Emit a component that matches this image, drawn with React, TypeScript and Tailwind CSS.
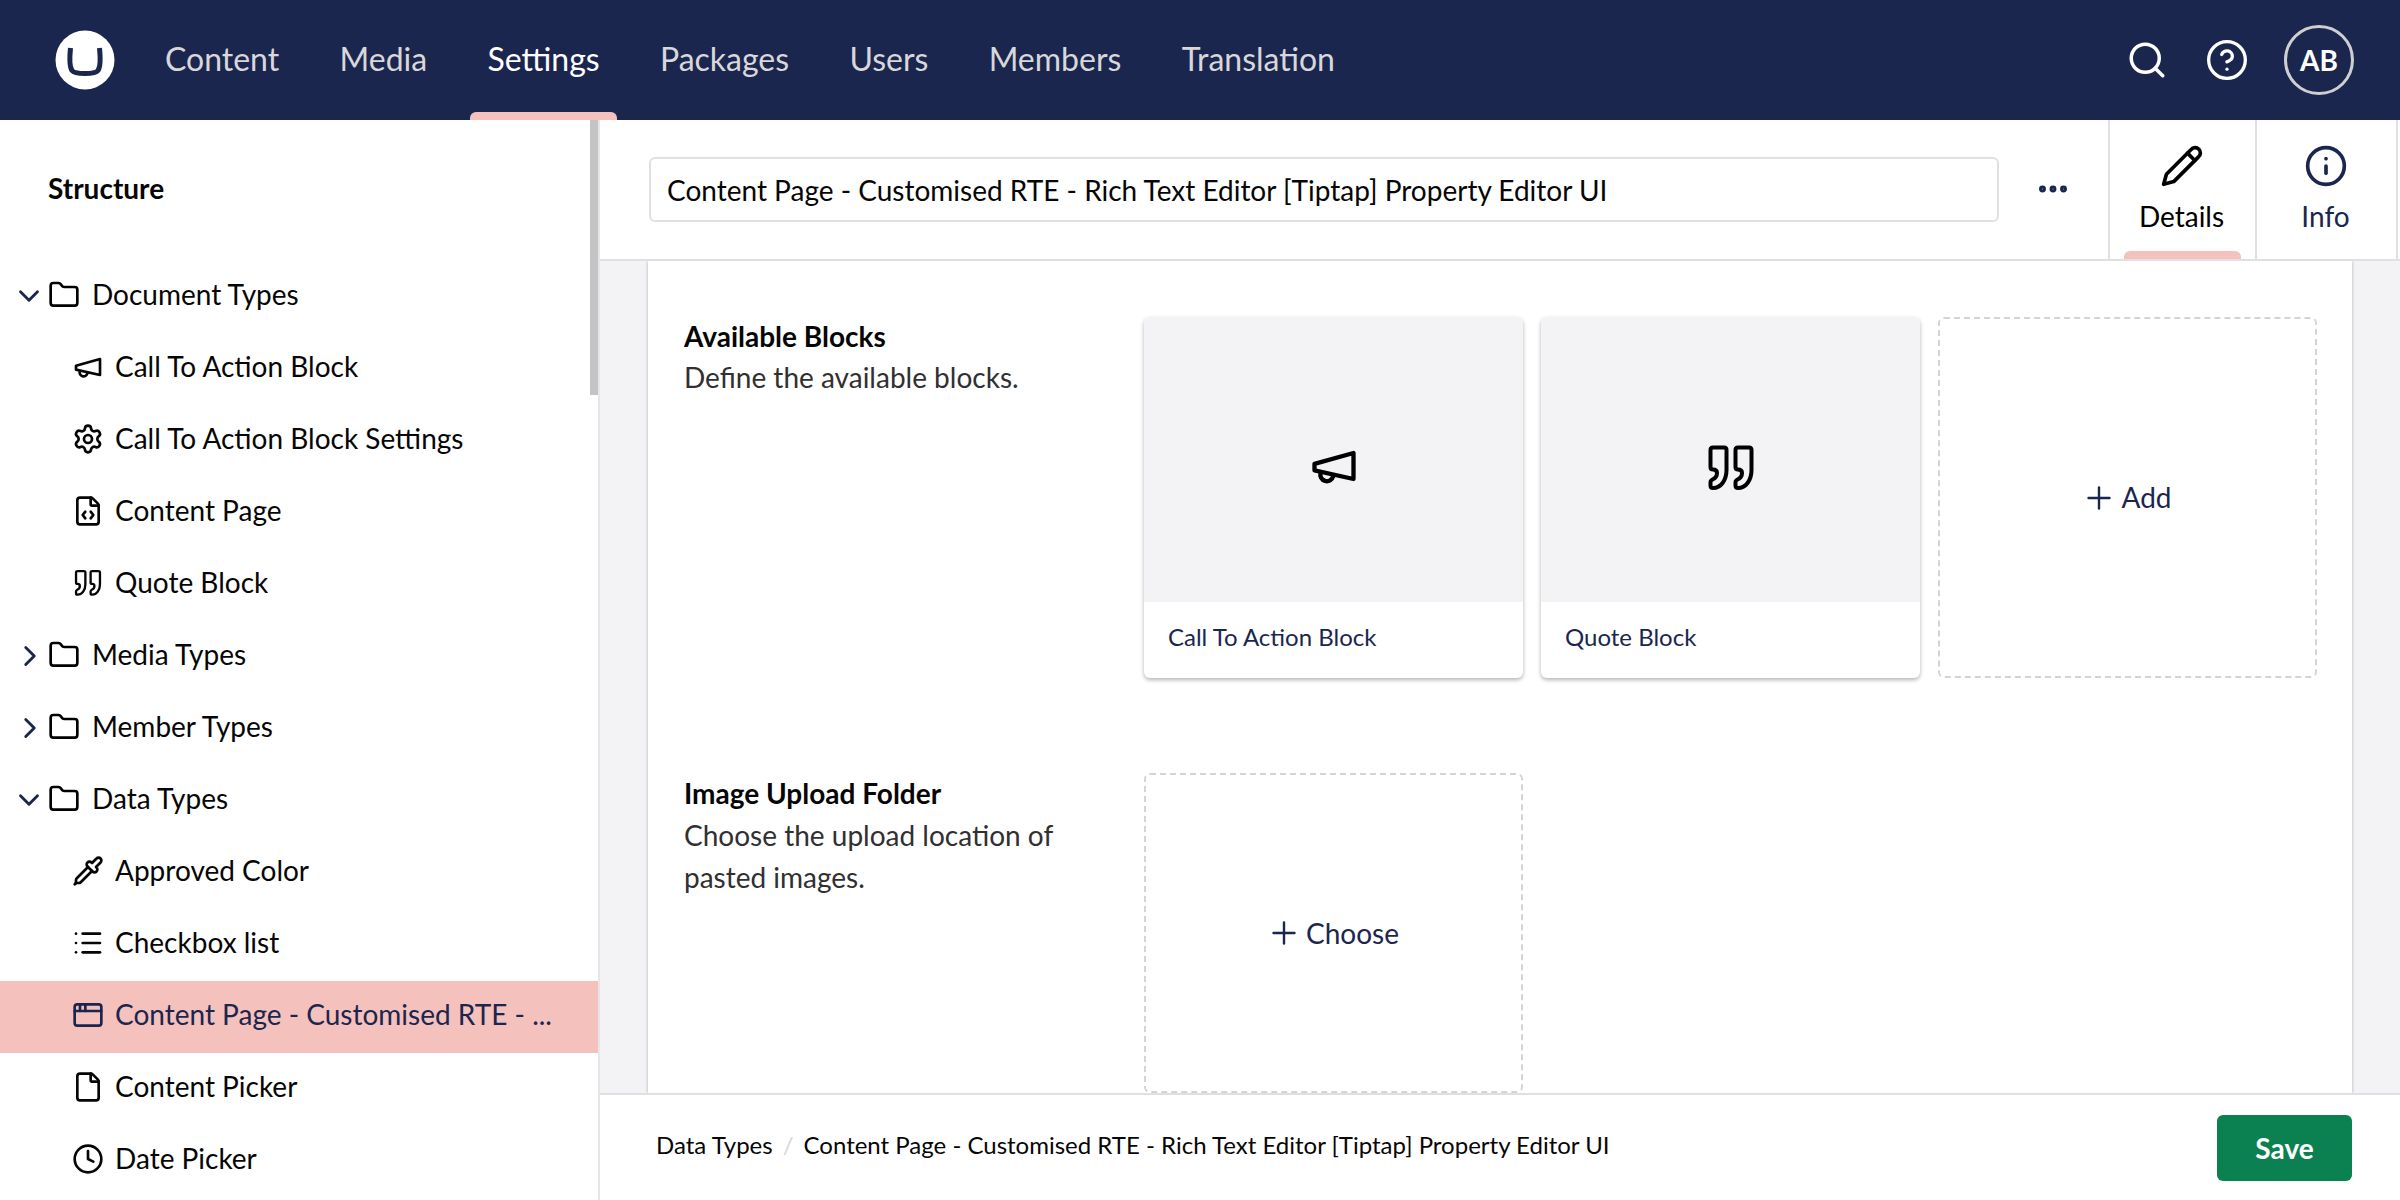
import { ChevronDown, ChevronRight, Clock, File, FileCode, Folder, Info, List, Pipette, Plus, Search, Settings, CircleHelp, Ellipsis } from 'lucide-react';
import type { ReactNode } from 'react';

const TITLE = 'Content Page - Customised RTE - Rich Text Editor [Tiptap] Property Editor UI';

function MegaphoneIcon({ className }: { className: string }) {
  return (
    <svg viewBox="0 0 24 24" fill="none" stroke="currentColor" strokeWidth="2" strokeLinecap="round" strokeLinejoin="round" className={className}>
      <path d="m3 11 18-5v12L3 14v-3z" />
      <path d="M11.6 16.8a3 3 0 1 1-5.8-1.6" />
    </svg>
  );
}

function QuoteIcon({ className }: { className: string }) {
  const mark = 'M6 3.5H17Q19.5 3.5 19.5 6V26C19.5 36 14 44 6 44Q3.5 44 3.5 41.5V38.5Q3.5 36.5 5.5 35.5C8 34.5 10 32 10 29Q10 25.5 6 25.5Q3.5 25.5 3.5 23V6Q3.5 3.5 6 3.5Z';
  return (
    <svg viewBox="0 0 48 48" fill="none" stroke="currentColor" strokeWidth="4" strokeLinecap="round" strokeLinejoin="round" className={className}>
      <path d={mark} />
      <path d={mark} transform="translate(25 0)" />
    </svg>
  );
}

function PencilIcon({ className }: { className: string }) {
  return (
    <svg viewBox="0 0 24 24" fill="none" stroke="currentColor" strokeWidth="2" strokeLinecap="round" strokeLinejoin="round" className={className}>
      <path d="M17 3a2.85 2.83 0 1 1 4 4L7.5 20.5 2 22l1.5-5.5Z" />
      <path d="m15 5 4 4" />
    </svg>
  );
}

function WindowIcon({ className }: { className: string }) {
  return (
    <svg viewBox="0 0 24 24" fill="none" stroke="currentColor" strokeWidth="2" strokeLinecap="round" strokeLinejoin="round" className={className}>
      <rect x="2" y="4" width="20" height="16" rx="2" />
      <path d="M2 9h20" />
      <path d="M6 4v5" />
      <path d="M10 4v5" />
    </svg>
  );
}

function Logo() {
  return (
    <svg viewBox="0 0 60 60" className="w-[60px] h-[60px] shrink-0">
      <circle cx="30" cy="30" r="29.5" fill="#ffffff" />
      <path d="M15.5 18C14.5 28 14.5 37 17 40.5C20 44.5 40 44.5 43 40.5C45.5 37 45.5 28 44.5 18" fill="none" stroke="#1b264f" strokeWidth="5" />
    </svg>
  );
}

function FolderRow({ open, label }: { open: boolean; label: string }) {
  return (
    <div className="flex items-center h-[72px] pl-[12px] pb-[5px]">
      <span className="w-[35px] flex items-center text-[#1b264f]">
        {open ? <ChevronDown className="w-[34px] h-[34px] mt-[2px]" strokeWidth={2} /> : <ChevronRight className="w-[34px] h-[34px] ml-[1px] mt-[2px]" strokeWidth={2} />}
      </span>
      <Folder className="ml-[1px] w-[32px] h-[32px] text-black" strokeWidth={2} />
      <span className="ml-[12px] pb-[2px]">{label}</span>
    </div>
  );
}

function LeafRow({ icon, label, active }: { icon: ReactNode; label: string; active?: boolean }) {
  return (
    <div className={active ? 'flex items-center h-[72px] pl-[71px] pb-[5px] bg-[#f5c1bc] text-[#1b264f]' : 'flex items-center h-[72px] pl-[71px] pb-[5px]'}>
      <span className="w-[34px] h-[34px] flex items-center justify-center">{icon}</span>
      <span className="ml-[10px] pb-[2px] whitespace-nowrap">{label}</span>
    </div>
  );
}

function Sidebar() {
  const ic = 'w-[32px] h-[32px]';
  return (
    <aside className="relative w-[600px] shrink-0 border-r-2 border-[#e6e6e8] overflow-hidden text-[28px] text-[#060606]">
      <div className="h-[141px] pl-[48px] pt-[47px] font-bold leading-[42px]">Structure</div>
      <FolderRow open label="Document Types" />
      <LeafRow icon={<MegaphoneIcon className={ic} />} label="Call To Action Block" />
      <LeafRow icon={<Settings className={ic} strokeWidth={2} />} label="Call To Action Block Settings" />
      <LeafRow icon={<FileCode className={ic} strokeWidth={2} />} label="Content Page" />
      <LeafRow icon={<QuoteIcon className="w-[28px] h-[28px]" />} label="Quote Block" />
      <FolderRow open={false} label="Media Types" />
      <FolderRow open={false} label="Member Types" />
      <FolderRow open label="Data Types" />
      <LeafRow icon={<Pipette className={ic} strokeWidth={2} />} label="Approved Color" />
      <LeafRow icon={<List className={ic} strokeWidth={2} />} label="Checkbox list" />
      <LeafRow active icon={<WindowIcon className={ic} />} label="Content Page - Customised RTE - ..." />
      <LeafRow icon={<File className={ic} strokeWidth={2} />} label="Content Picker" />
      <LeafRow icon={<Clock className={ic} strokeWidth={2} />} label="Date Picker" />
      {/* scrollbar thumb */}
      <div className="absolute right-0 top-0 w-[8px] h-[275px] bg-[#c4c4c4]" />
    </aside>
  );
}

function BlockCard({ icon, label }: { icon: ReactNode; label: string }) {
  return (
    <div className="h-[361px] rounded-[6px] bg-white overflow-hidden shadow-[0_2px_4px_rgba(0,0,0,0.3)] flex flex-col">
      <div className="h-[285px] pt-[16px] bg-[#f3f3f5] flex items-center justify-center">{icon}</div>
      <div className="flex-1 flex items-center pl-[24px] pb-[6px] text-[24px] text-[#1b264f]">{label}</div>
    </div>
  );
}

function DashedButton({ label, className }: { label: string; className: string }) {
  return (
    <div className={`${className} rounded-[6px] border-2 border-dashed border-[#d4d4d6] flex items-center justify-center gap-[4px] text-[28px] text-[#1b264f]`}>
      <Plus className="w-[36px] h-[36px] -ml-[2px]" strokeWidth={1.6} />
      <span className="pb-[1px]">{label}</span>
    </div>
  );
}

function NavItem({ label, active }: { label: string; active?: boolean }) {
  return (
    <span className={active ? 'relative h-full flex items-center pb-[3px] text-white' : 'h-full flex items-center pb-[3px]'}>
      {label}
      {active && <span className="absolute -left-[17px] -right-[17px] bottom-0 h-[8px] rounded-t-[6px] bg-[#f5c1bc]" />}
    </span>
  );
}

export default function App() {
  return (
    <div className="h-screen w-full overflow-hidden flex flex-col bg-white font-['Lato',sans-serif]">
      <header className="h-[120px] shrink-0 bg-[#1b264f] flex items-center pl-[55px] pr-[46px]">
        <Logo />
        <nav className="ml-[50px] flex gap-[60.3px] h-full items-center text-[32px] text-[#d8d7d9]">
          <NavItem label="Content" />
          <NavItem label="Media" />
          <NavItem label="Settings" active />
          <NavItem label="Packages" />
          <NavItem label="Users" />
          <NavItem label="Members" />
          <NavItem label="Translation" />
        </nav>
        <div className="ml-auto flex items-center text-white">
          <Search className="w-[42px] h-[42px]" strokeWidth={2} />
          <CircleHelp className="ml-[37px] w-[44px] h-[44px]" strokeWidth={1.8} />
          <div className="ml-[35px] w-[70px] h-[70px] rounded-full border-[3px] border-[#cfcfd1] flex items-center justify-center text-[28px] font-bold">AB</div>
        </div>
      </header>

      <div className="flex-1 flex min-h-0">
        <Sidebar />
        <main className="flex-1 flex flex-col min-w-0">
          <div className="h-[141px] shrink-0 border-b-2 border-[#e0e0e2] flex pl-[49px]">
            <div className="mt-[37px] w-[1350px] h-[65px] rounded-[6px] border-2 border-[#e0e0e2] flex items-center pl-[16px] text-[28px] text-[#060606]">{TITLE}</div>
            <div className="w-[109px] flex items-center justify-center pr-[2px] pb-[2px]">
              <Ellipsis className="w-[36px] h-[36px] text-[#1b264f]" strokeWidth={2.6} />
            </div>
            <div className="relative w-[147px] border-l-2 border-[#e0e0e2] flex flex-col items-center pt-[24px] pr-[2px] text-[28px] text-black">
              <PencilIcon className="w-[44px] h-[44px]" />
              <span className="leading-[42px] mt-[7px]">Details</span>
              <span className="absolute left-[14px] w-[117px] bottom-0 h-[8px] rounded-t-[6px] bg-[#f5c1bc]" />
            </div>
            <div className="w-[143px] border-x-2 border-[#e0e0e2] flex flex-col items-center pt-[24px] pr-[2px] text-[28px] text-[#1b264f]">
              <Info className="w-[44px] h-[44px]" strokeWidth={2} />
              <span className="leading-[42px] mt-[7px]">Info</span>
            </div>
          </div>

          <div className="flex-1 min-h-0 overflow-hidden bg-[#f3f3f5] px-[48px]">
            <div className="h-full bg-white shadow-[0_0_3px_rgba(0,0,0,0.3)] pl-[36px] pr-[35px] pt-[53px] text-[28px] leading-[42px] text-[#303033]">
              <div className="flex">
                <div className="w-[460px] shrink-0">
                  <div className="h-[42px] pt-[1px] font-bold text-[#060606]">Available Blocks</div>
                  <div>Define the available blocks.</div>
                </div>
                <div className="flex-1 grid grid-cols-3 gap-[18px] pt-[3px]">
                  <BlockCard icon={<MegaphoneIcon className="w-[52px] h-[52px] -mt-[3px] text-black" />} label="Call To Action Block" />
                  <BlockCard icon={<QuoteIcon className="w-[48px] h-[48px] text-black" />} label="Quote Block" />
                  <DashedButton label="Add" className="h-[361px]" />
                </div>
              </div>
              <div className="flex mt-[94px]">
                <div className="w-[460px] shrink-0">
                  <div className="font-bold text-[#060606]">Image Upload Folder</div>
                  <div className="w-[420px]">Choose the upload location of pasted images.</div>
                </div>
                <DashedButton label="Choose" className="w-[379px] h-[320px] mt-[1px]" />
              </div>
            </div>
          </div>

          <footer className="h-[107px] shrink-0 border-t-2 border-[#e0e0e2] flex items-center pl-[56px] pr-[48px]">
            <div className="flex items-center pb-[5px] text-[24px] text-[#060606]">
              <span>Data Types</span>
              <span className="mx-[10px] text-[#d8d7d9]">/</span>
              <span>{TITLE}</span>
            </div>
            <button className="ml-auto w-[135px] h-[66px] rounded-[6px] bg-[#0b8152] text-white text-[28px] font-bold">Save</button>
          </footer>
        </main>
      </div>
    </div>
  );
}
